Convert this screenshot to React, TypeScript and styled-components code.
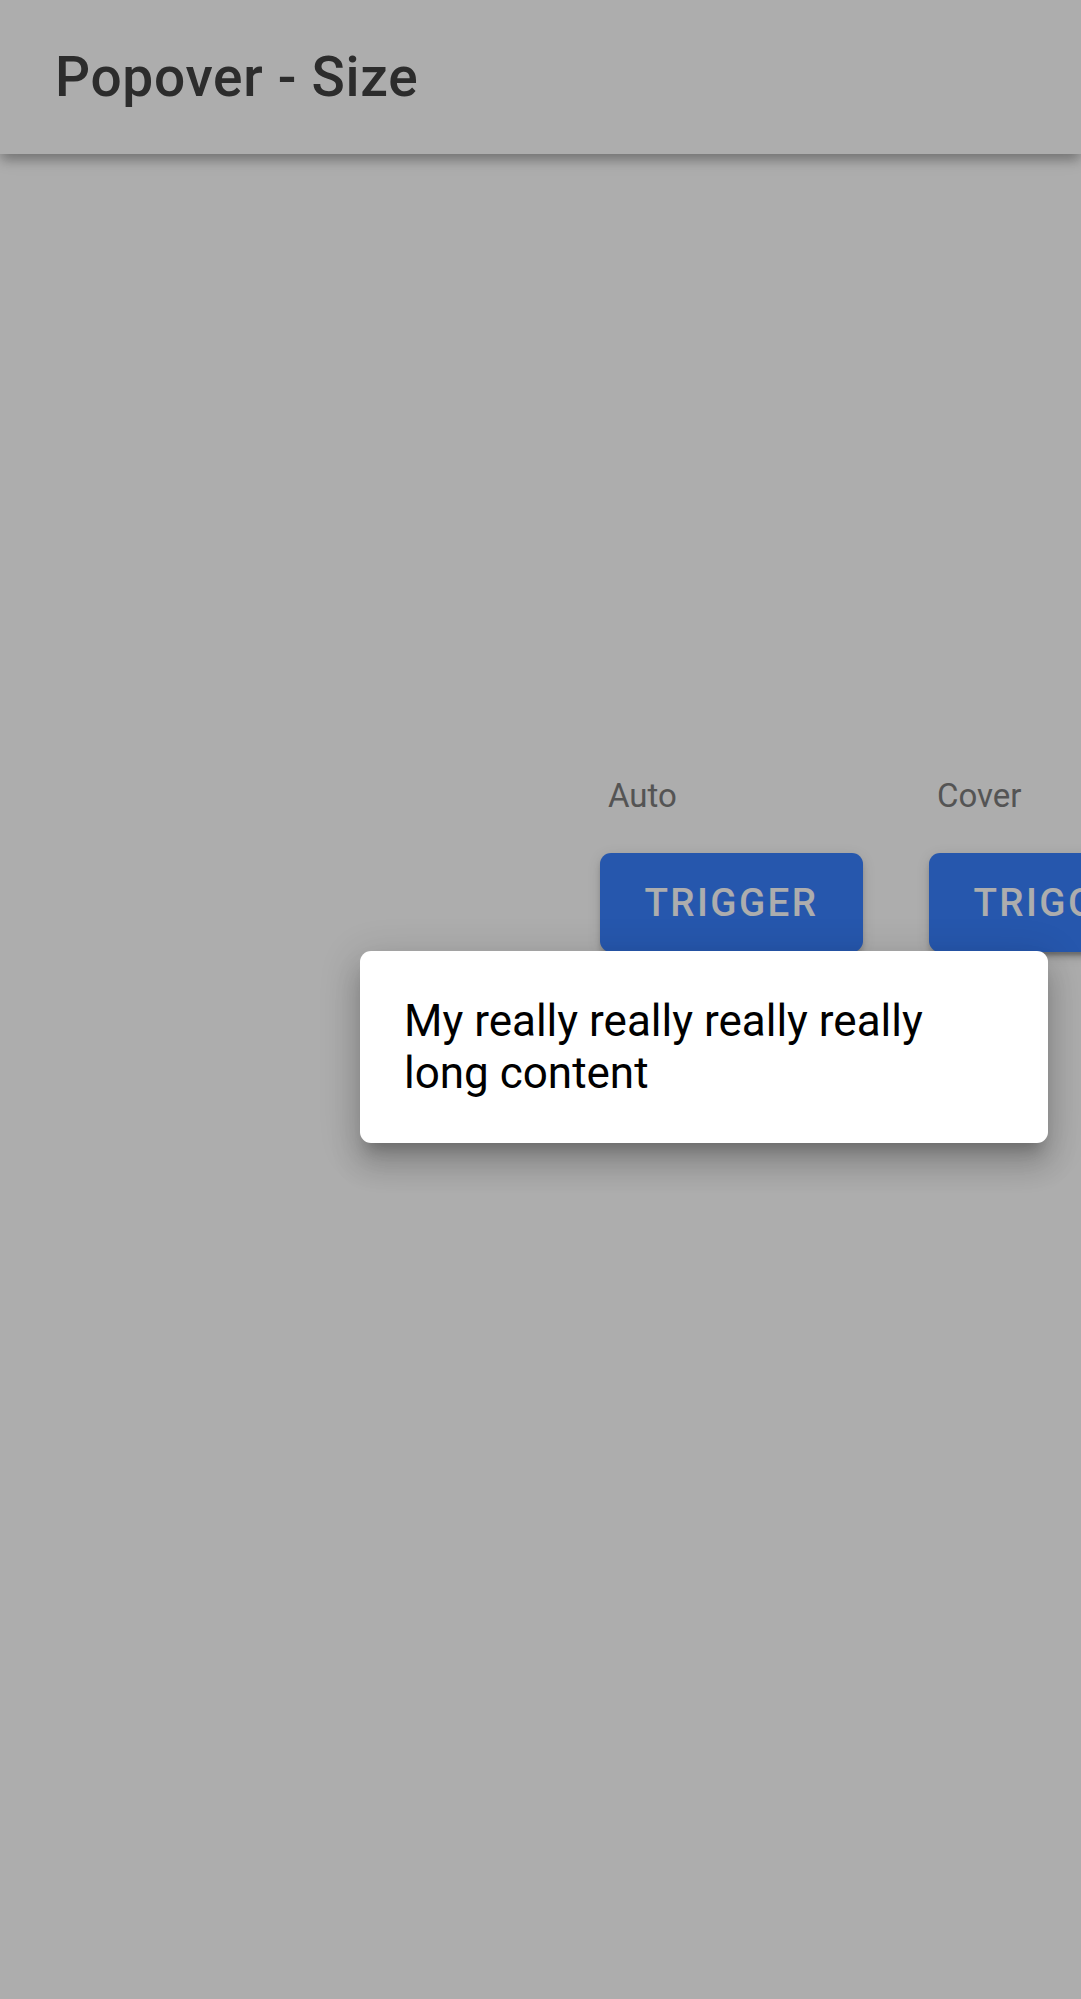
import styled, { createGlobalStyle } from "styled-components";

const GlobalStyle = createGlobalStyle`
  html, body {
    margin: 0;
    padding: 0;
    width: 1081px;
    height: 1999px;
    overflow: hidden;
    background: #ffffff;
    font-family: Roboto, "Noto Sans", "Liberation Sans", sans-serif;
  }
  * {
    box-sizing: border-box;
  }
`;

const Page = styled.div`
  position: relative;
  width: 1081px;
  height: 1999px;
  overflow: hidden;
  background: #ffffff;
`;

const Header = styled.header`
  position: relative;
  z-index: 1;
  height: 154px;
  display: flex;
  align-items: center;
  padding: 0 55px;
  background: #ffffff;
  box-shadow: 0 5.5px 11px -2.75px rgba(0, 0, 0, 0.2),
    0 8px 10px 0 rgba(0, 0, 0, 0.12), 0 2.75px 20px 0 rgba(0, 0, 0, 0.1);
`;

const Title = styled.h1`
  margin: 0;
  font-size: 55px;
  font-weight: 500;
  letter-spacing: 0.7px;
  color: #424242;
`;

const Content = styled.main`
  padding: 622px 0 0 594px;
`;

const Row = styled.div`
  display: flex;
  flex-wrap: nowrap;
`;

const Column = styled.div`
  flex: 0 0 329px;
  display: flex;
  flex-direction: column;
  align-items: flex-start;
`;

const Label = styled.div`
  margin: 0 0 27px 14px;
  font-size: 33px;
  color: #7d7d7d;
`;

const Trigger = styled.button`
  height: 99px;
  margin: 11px 5.5px;
  padding: 0 45px;
  border: none;
  border-radius: 11px;
  background: #3880ff;
  color: #ffffff;
  font-family: inherit;
  font-size: 38.5px;
  font-weight: 500;
  letter-spacing: 2.4px;
  text-transform: uppercase;
  white-space: nowrap;
  box-shadow: 0 8px 3px -5px rgba(0, 0, 0, 0.2),
    0 5.5px 5.5px 0 rgba(0, 0, 0, 0.14), 0 3px 14px 0 rgba(0, 0, 0, 0.12);
`;

const Backdrop = styled.div`
  position: absolute;
  inset: 0;
  z-index: 2;
  background: rgba(0, 0, 0, 0.32);
`;

const Popover = styled.div`
  position: absolute;
  z-index: 3;
  left: 360px;
  top: 951px;
  width: 688px;
  padding: 44px;
  border-radius: 11px;
  background: #ffffff;
  color: #000000;
  font-size: 44px;
  box-shadow: 0 14px 14px -8px rgba(0, 0, 0, 0.2),
    0 22px 28px 3px rgba(0, 0, 0, 0.14), 0 8px 38px 6px rgba(0, 0, 0, 0.12);
`;

const columns = ["Auto", "Cover"];

export default function App() {
  return (
    <Page>
      <GlobalStyle />
      <Header>
        <Title>Popover - Size</Title>
      </Header>
      <Content>
        <Row>
          {columns.map((c) => (
            <Column key={c}>
              <Label>{c}</Label>
              <Trigger>Trigger</Trigger>
            </Column>
          ))}
        </Row>
      </Content>
      <Backdrop />
      <Popover>My really really really really long content</Popover>
    </Page>
  );
}
